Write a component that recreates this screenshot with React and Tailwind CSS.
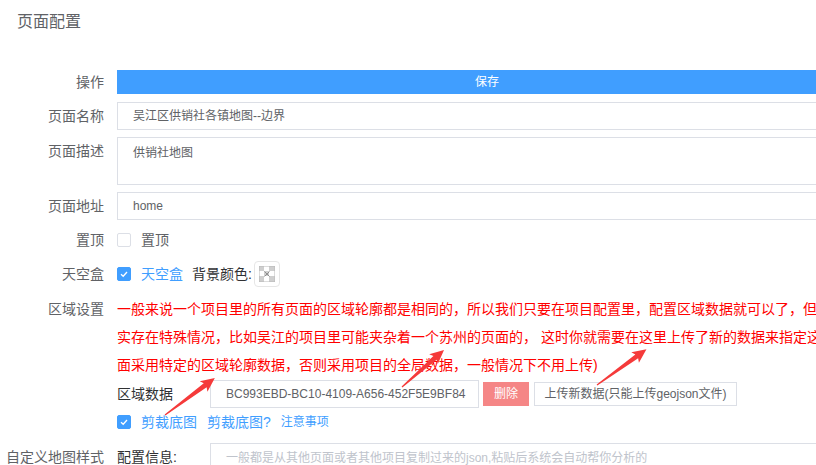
import React from 'react';

const font = "font-['Liberation_Sans','Noto_Sans_CJK_SC',sans-serif]";

const Check = ({ on }) => (
  <span
    className={
      'w-[14px] h-[14px] rounded-[2px] flex items-center justify-center shrink-0 ' +
      (on ? 'bg-[#409eff] border border-[#409eff]' : 'bg-white border border-[#dcdfe6]')
    }
  >
    {on && (
      <svg width="10" height="10" viewBox="0 0 10 10">
        <path d="M2 5.2 L4.2 7.3 L8 3" fill="none" stroke="#fff" strokeWidth="1.3" />
      </svg>
    )}
  </span>
);

const Row = ({ label, top = 'mt-0', lh = 'leading-[28px]', children }) => (
  <div className={'flex ' + top}>
    <div className={'w-[104px] shrink-0 text-right text-[14px] text-[#606266] whitespace-nowrap ' + lh}>{label}</div>
    <div className="ml-[13px] w-[740px] shrink-0">{children}</div>
  </div>
);

// annotation arrow drawn along +x, then rotated into place
const Arrow = ({ x, y, len, angle }) => (
  <g transform={`translate(${x} ${y}) rotate(${angle})`}>
    <polygon
      points={`0,-0.6 ${len - 12},-2.4 ${len - 14},-6.5 ${len},0 ${len - 14},6.5 ${len - 12},2.4 0,0.6`}
      fill="#f53a3a"
    />
  </g>
);

export default function App() {
  return (
    <div className={'relative w-[816px] h-[465px] overflow-hidden bg-white ' + font}>
      <div className="h-[44px] px-[17px] flex items-center text-[16px] text-[#606266]">页面配置</div>

      <div className="pt-[26px]">
        <Row label="操作" lh="leading-[24px]">
          <div className="h-[24px] bg-[#409eff] text-white text-[12px] flex items-center justify-center">保存</div>
        </Row>

        <Row label="页面名称" top="mt-[8px]">
          <div className="h-[28px] border border-[#dcdfe6] px-[15px] flex items-center text-[12px] text-[#606266]">
            吴江区供销社各镇地图--边界
          </div>
        </Row>

        <Row label="页面描述" top="mt-[7px]">
          <div className="h-[48px] border border-[#dcdfe6] px-[15px] pt-[6px] text-[12px] leading-[18px] text-[#606266]">
            供销社地图
          </div>
        </Row>

        <Row label="页面地址" top="mt-[7px]">
          <div className="h-[28px] border border-[#dcdfe6] px-[15px] flex items-center text-[12px] text-[#606266]">
            home
          </div>
        </Row>

        <Row label="置顶" top="mt-[6px]">
          <div className="h-[28px] flex items-center">
            <Check />
            <span className="ml-[10px] text-[14px] text-[#606266]">置顶</span>
          </div>
        </Row>

        <Row label="天空盒" top="mt-[6px]">
          <div className="h-[28px] flex items-center">
            <Check on />
            <span className="ml-[10px] text-[14px] text-[#409eff]">天空盒</span>
            <span className="ml-[9px] text-[14px] text-[#303133]">背景颜色:</span>
            <span className="ml-[2px] w-[26px] h-[26px] rounded-[4px] border border-[#e6e6e6] flex items-center justify-center">
              <svg width="16" height="16" viewBox="0 0 16 16">
                <rect width="16" height="16" fill="#ffffff" />
                <rect x="0" y="0" width="5" height="5" fill="#cfcfcf" />
                <rect x="10" y="0" width="6" height="5" fill="#cfcfcf" />
                <rect x="5" y="5" width="5" height="5" fill="#cfcfcf" />
                <rect x="0" y="10" width="5" height="6" fill="#cfcfcf" />
                <rect x="10" y="10" width="6" height="6" fill="#cfcfcf" />
                <rect width="16" height="16" fill="none" stroke="#b8b8b8" strokeWidth="1" />
                <path d="M5.5 5.5 L10.5 10.5 M10.5 5.5 L5.5 10.5" stroke="#8f8f8f" strokeWidth="1" />
              </svg>
            </span>
          </div>
        </Row>

        <Row label="区域设置" top="mt-[7px]">
          <div className="text-[14px] leading-[28px] text-[#ff0000] whitespace-nowrap">
            <div>一般来说一个项目里的所有页面的区域轮廓都是相同的，所以我们只要在项目配置里，配置区域数据就可以了，但是确</div>
            <div>实存在特殊情况，比如吴江的项目里可能夹杂着一个苏州的页面的， 这时你就需要在这里上传了新的数据来指定这个页</div>
            <div>面采用特定的区域轮廓数据，否则采用项目的全局数据，一般情况下不用上传)</div>
          </div>
        </Row>

        <Row label="" top="mt-[1px]">
          <div className="h-[28px] flex items-center">
            <span className="w-[93px] shrink-0 text-[14px] text-[#303133]">区域数据</span>
            <div className="w-[269px] h-[28px] border border-[#dcdfe6] px-[15px] flex items-center text-[12px] text-[#606266] whitespace-nowrap overflow-hidden">
              BC993EBD-BC10-4109-A656-452F5E9BF84
            </div>
            <button className="ml-[4px] w-[46px] h-[24px] bg-[#f58686] text-white text-[12px] flex items-center justify-center">
              删除
            </button>
            <button className="ml-[5px] w-[203px] h-[24px] border border-[#dcdfe6] bg-white text-[12px] text-[#606266] flex items-center justify-center">
              上传新数据(只能上传geojson文件)
            </button>
          </div>
        </Row>

        <Row label="">
          <div className="h-[28px] flex items-center">
            <Check on />
            <span className="ml-[10px] text-[14px] text-[#409eff]">剪裁底图</span>
            <span className="ml-[10px] text-[14px] text-[#409eff]">剪裁底图?</span>
            <span className="ml-[10px] text-[12px] text-[#409eff]">注意事项</span>
          </div>
        </Row>

        <Row label="自定义地图样式" top="mt-[7px]">
          <div className="flex">
            <span className="w-[93px] shrink-0 text-[14px] leading-[28px] text-[#303133]">配置信息:</span>
            <div className="w-[647px] h-[60px] border border-[#dcdfe6] px-[15px] pt-[5px] text-[12px] leading-[18px] text-[#c0c4cc] whitespace-nowrap">
              一般都是从其他页面或者其他项目复制过来的json,粘贴后系统会自动帮你分析的
            </div>
          </div>
        </Row>
      </div>

      <svg className="absolute left-0 top-0 pointer-events-none" width="816" height="465">
        <Arrow x={165} y={415} len={62} angle={-36.5} />
        <Arrow x={402} y={387} len={56} angle={-41.4} />
        <Arrow x={597} y={385} len={61} angle={-35.8} />
      </svg>
    </div>
  );
}
